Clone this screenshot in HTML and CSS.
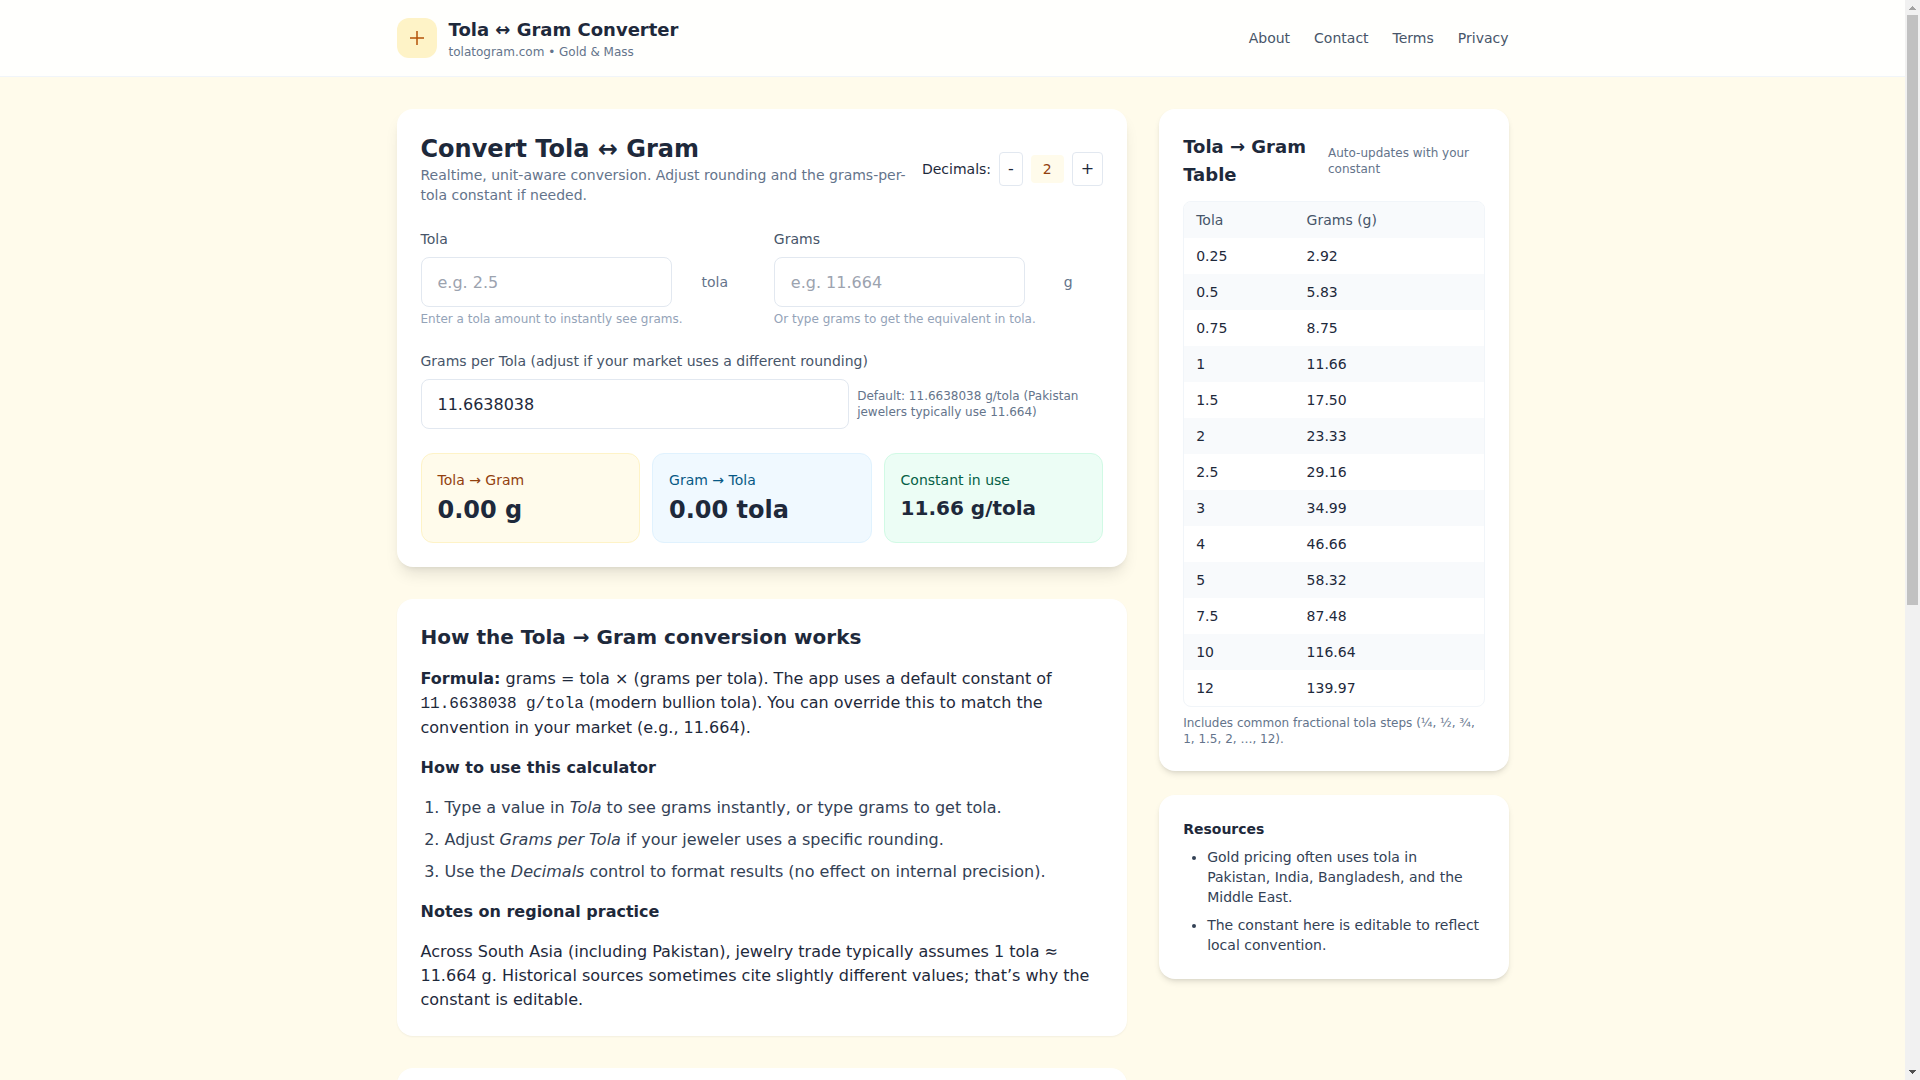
FILE: index.html
```html
<!DOCTYPE html>
<html lang="en">
<head>
<meta charset="utf-8">
<meta name="viewport" content="width=device-width, initial-scale=1">
<title>Tola ↔ Gram Converter</title>
<link rel="stylesheet" href="styles.css">
</head>
<body>
<div class="page">
<header class="site-header">
  <div class="container header-row">
    <div class="brand">
      <div class="brand-icon">
        <svg width="24" height="24" viewBox="0 0 24 24" fill="none" stroke="currentColor" stroke-width="1.5" aria-hidden="true"><path d="M12 5v14M5 12h14"/></svg>
      </div>
      <div>
        <h1 class="brand-title">Tola ↔ Gram Converter</h1>
        <p class="brand-sub">tolatogram.com • Gold &amp; Mass</p>
      </div>
    </div>
    <nav class="site-nav">
      <a href="#">About</a>
      <a href="#">Contact</a>
      <a href="#">Terms</a>
      <a href="#">Privacy</a>
    </nav>
  </div>
</header>
<main class="container layout">
  <div class="main-column">
    <section class="card converter">
      <div class="converter-head">
        <div>
          <h2 class="converter-title">Convert Tola ↔ Gram</h2>
          <p class="lead">Realtime, unit-aware conversion. Adjust rounding and the grams-per-tola constant if needed.</p>
        </div>
        <div class="decimals">
          <span>Decimals:</span>
          <button type="button" class="step">-</button>
          <output class="decimals-value">2</output>
          <button type="button" class="step">+</button>
        </div>
      </div>
      <div class="fields">
        <div>
          <label class="label" for="tola">Tola</label>
          <div class="field-row">
            <input class="input" id="tola" type="number" step="any" placeholder="e.g. 2.5">
            <span class="unit">tola</span>
          </div>
          <p class="hint">Enter a tola amount to instantly see grams.</p>
        </div>
        <div>
          <label class="label" for="grams">Grams</label>
          <div class="field-row">
            <input class="input" id="grams" type="number" step="any" placeholder="e.g. 11.664">
            <span class="unit">g</span>
          </div>
          <p class="hint">Or type grams to get the equivalent in tola.</p>
        </div>
      </div>
      <div>
        <label class="label" for="constant">Grams per Tola (adjust if your market uses a different rounding)</label>
        <div class="field-row">
          <input class="input" id="constant" type="number" step="any" value="11.6638038">
          <span class="default-note">Default: 11.6638038 g/tola (Pakistan jewelers typically use 11.664)</span>
        </div>
      </div>
      <div class="results">
        <div class="result amber">
          <div>Tola → Gram</div>
          <div class="result-value">0.00 g</div>
        </div>
        <div class="result sky">
          <div>Gram → Tola</div>
          <div class="result-value">0.00 tola</div>
        </div>
        <div class="result emerald">
          <div>Constant in use</div>
          <div class="result-value small">11.66 g/tola</div>
        </div>
      </div>
    </section>
    <article class="card article">
      <h2>How the Tola → Gram conversion works</h2>
      <p><strong>Formula:</strong> grams = tola × (grams per tola). The app uses a default constant of <code>11.6638038 g/tola</code> (modern bullion tola). You can override this to match the convention in your market (e.g., 11.664).</p>
      <h3>How to use this calculator</h3>
      <ol>
        <li>Type a value in <em>Tola</em> to see grams instantly, or type grams to get tola.</li>
        <li>Adjust <em>Grams per Tola</em> if your jeweler uses a specific rounding.</li>
        <li>Use the <em>Decimals</em> control to format results (no effect on internal precision).</li>
      </ol>
      <h3>Notes on regional practice</h3>
      <p>Across South Asia (including Pakistan), jewelry trade typically assumes 1 tola ≈ 11.664 g. Historical sources sometimes cite slightly different values; that’s why the constant is editable.</p>
    </article>
    <section class="card more"></section>
  </div>
  <aside class="side-column">
    <section class="card side-card">
      <div class="table-head">
        <h2>Tola → Gram Table</h2>
        <span class="note">Auto-updates with your constant</span>
      </div>
      <div class="table-wrap">
        <table>
          <thead><tr><th>Tola</th><th>Grams (g)</th></tr></thead>
          <tbody>
            <tr><td>0.25</td><td>2.92</td></tr>
            <tr><td>0.5</td><td>5.83</td></tr>
            <tr><td>0.75</td><td>8.75</td></tr>
            <tr><td>1</td><td>11.66</td></tr>
            <tr><td>1.5</td><td>17.50</td></tr>
            <tr><td>2</td><td>23.33</td></tr>
            <tr><td>2.5</td><td>29.16</td></tr>
            <tr><td>3</td><td>34.99</td></tr>
            <tr><td>4</td><td>46.66</td></tr>
            <tr><td>5</td><td>58.32</td></tr>
            <tr><td>7.5</td><td>87.48</td></tr>
            <tr><td>10</td><td>116.64</td></tr>
            <tr><td>12</td><td>139.97</td></tr>
          </tbody>
        </table>
      </div>
      <p class="note">Includes common fractional tola steps (¼, ½, ¾, 1, 1.5, 2, …, 12).</p>
    </section>
    <section class="card side-card resources">
      <h2>Resources</h2>
      <ul>
        <li>Gold pricing often uses tola in Pakistan, India, Bangladesh, and the Middle East.</li>
        <li>The constant here is editable to reflect local convention.</li>
      </ul>
    </section>
  </aside>
</main>
</div>
<div class="scrollbar" aria-hidden="true">
  <svg class="arrow-up" width="15" height="15" viewBox="0 0 15 15" shape-rendering="crispEdges"><path d="M7 6h1v1h1v1h1v1h1v1H4V9h1V8h1V7h1z"/></svg>
  <div class="track"><div class="thumb"></div></div>
  <svg class="arrow-down" width="15" height="15" viewBox="0 0 15 15" shape-rendering="crispEdges"><path d="M4 5h7v1h-1v1H9v1H8v1H7V8H6V7H5V6H4z"/></svg>
</div>
</body>
</html>
```
FILE: styles.css
```css
*, *::before, *::after { box-sizing: border-box; }
h1, h2, h3, p, ol, ul { margin: 0; padding: 0; }

body {
  display: flex;
  height: 100vh;
  margin: 0;
  overflow: hidden;
  background: #fffbeb;
  color: #1e293b;
  font: 16px/24px "DejaVu Sans", sans-serif;
}

.page { flex: 1; min-width: 0; overflow: hidden; }

.scrollbar { display: flex; flex-direction: column; flex: 0 0 15px; background: #f1f1f1; }
.track { flex: 1; padding: 0 2px; }
.thumb { height: 56.2%; background: #c1c1c1; }
.arrow-up { display: block; fill: #a3a3a3; }
.arrow-down { display: block; fill: #505050; }

input, button { font: inherit; color: inherit; }
code { font-family: "Liberation Mono", monospace; font-size: 16px; }

.container { max-width: 1152px; margin: 0 auto; padding: 0 20px; }

.site-header { background: #fffffd; border-bottom: 1px solid #f1f5f9; }
.header-row {
  display: flex;
  align-items: center;
  justify-content: space-between;
  padding-top: 16px;
  padding-bottom: 16px;
}
.brand { display: flex; align-items: center; gap: 12px; }
.brand-icon {
  display: flex;
  align-items: center;
  justify-content: center;
  width: 40px;
  height: 40px;
  border-radius: 12px;
  background: #fef3c7;
  color: #b45309;
}
.brand-title { font-size: 18px; line-height: 28px; }
.brand-sub { font-size: 12px; line-height: 16px; color: #64748b; }
.site-nav { display: flex; gap: 24px; font-size: 14px; line-height: 20px; }
.site-nav a { color: #475569; text-decoration: none; }

.layout {
  display: grid;
  grid-template-columns: repeat(3, minmax(0, 1fr));
  align-items: start;
  gap: 32px;
  padding-top: 32px;
  padding-bottom: 32px;
}
.main-column { grid-column: span 2; display: flex; flex-direction: column; gap: 32px; }
.side-column { display: flex; flex-direction: column; gap: 24px; }

.card { background: #fff; border-radius: 16px; padding: 24px; }
.converter {
  display: flex;
  flex-direction: column;
  gap: 24px;
  box-shadow: 0 10px 15px -3px rgb(0 0 0 / 0.1), 0 4px 6px -4px rgb(0 0 0 / 0.1);
}
.article, .more { box-shadow: 0 1px 2px 0 rgb(0 0 0 / 0.05); }
.more { min-height: 320px; }
.side-card { box-shadow: 0 4px 6px -1px rgb(0 0 0 / 0.1), 0 2px 4px -2px rgb(0 0 0 / 0.1); }

.converter-head { display: flex; align-items: center; justify-content: space-between; gap: 16px; }
.converter-title { font-size: 24px; line-height: 32px; }
.lead { font-size: 14px; line-height: 20px; color: #64748b; }
.decimals { display: flex; align-items: center; gap: 8px; font-size: 14px; line-height: 20px; }
.step {
  padding: 4px 8px;
  border: 1px solid #e2e8f0;
  border-radius: 4px;
  background: #fff;
  font-size: 16px;
  line-height: 24px;
}
.decimals-value { padding: 4px 12px; border-radius: 4px; background: #fffbeb; color: #92400e; }

.fields { display: grid; grid-template-columns: 1fr 1fr; gap: 24px; }
.label { display: block; margin-bottom: 8px; font-size: 14px; line-height: 20px; color: #475569; }
.field-row { display: flex; align-items: center; gap: 8px; }
.input {
  flex: 1;
  min-width: 0;
  height: 50px;
  padding: 12px 16px;
  border: 1px solid #e2e8f0;
  border-radius: 8px;
  background: #fff;
  line-height: 24px;
}
.input::placeholder { color: #9ca3af; }
.input::-webkit-inner-spin-button { height: auto; }
.unit { width: 70px; text-align: center; font-size: 14px; line-height: 20px; color: #64748b; }
.hint { margin-top: 4px; font-size: 12px; line-height: 16px; color: #94a3b8; }
.default-note { flex: 0 0 246px; font-size: 12px; line-height: 16px; color: #64748b; }

.results { display: grid; grid-template-columns: repeat(3, 1fr); gap: 12px; }
.result { padding: 16px; border: 1px solid; border-radius: 12px; font-size: 14px; line-height: 20px; }
.result-value { margin-top: 4px; color: #1e293b; font-size: 24px; line-height: 32px; font-weight: 700; }
.result-value.small { font-size: 20px; line-height: 28px; }
.amber { background: #fffbeb; border-color: #fef3c7; color: #92400e; }
.sky { background: #f0f9ff; border-color: #e0f2fe; color: #075985; }
.emerald { background: #ecfdf5; border-color: #d1fae5; color: #065f46; }

.article { display: flex; flex-direction: column; gap: 16px; }
.article h2 { font-size: 20px; line-height: 28px; }
.article h3 { font-size: 16px; line-height: 24px; }
.article ol { padding-left: 24px; color: #334155; }
li + li { margin-top: 8px; }

.table-head { display: flex; align-items: center; justify-content: space-between; margin-bottom: 12px; }
.table-head h2 { font-size: 18px; line-height: 28px; }
.note { font-size: 12px; line-height: 16px; color: #64748b; }
.table-wrap { overflow: hidden; margin-bottom: 8px; border: 1px solid #f1f5f9; border-radius: 8px; }
table { width: 100%; border-collapse: collapse; font-size: 14px; line-height: 20px; }
th, td { padding: 8px 12px; text-align: left; font-weight: 400; }
thead { background: #f8fafc; color: #475569; }
tbody tr:nth-child(even) { background: #f8fafc; }

.resources { font-size: 14px; line-height: 20px; }
.resources h2 { margin-bottom: 8px; font-size: 14px; line-height: 20px; }
.resources ul { padding-left: 24px; color: #334155; }
```
